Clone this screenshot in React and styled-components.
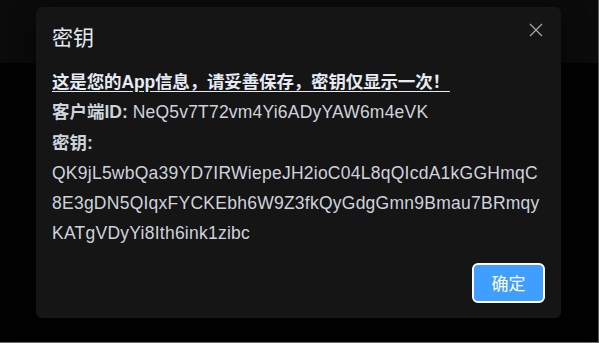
import styled, { createGlobalStyle } from "styled-components";

const GlobalStyle = createGlobalStyle`
  html, body {
    margin: 0;
    padding: 0;
    background: #020202;
  }
  body {
    font-family: "Liberation Sans", "Noto Sans CJK SC", sans-serif;
  }
`;

const appInfo = {
  clientId: "NeQ5v7T72vm4Yi6ADyYAW6m4eVK",
  secret:
    "QK9jL5wbQa39YD7IRWiepeJH2ioC04L8qQIcdA1kGGHmqC8E3gDN5QIqxFYCKEbh6W9Z3fkQyGdgGmn9Bmau7BRmqyKATgVDyYi8Ith6ink1zibc",
};

const Page = styled.div`
  position: relative;
  width: 599px;
  height: 343px;
  box-sizing: border-box;
  border-right: 1px solid #5a5a5a;
  border-bottom: 1px solid #6a6a6a;
  background: #020202;
  overflow: hidden;
`;

const TopBar = styled.div`
  height: 63px;
  background: #0b0b0b;
`;

const Overlay = styled.div`
  position: absolute;
  inset: 0;
  padding: 7px 0 0 36px;
`;

const Dialog = styled.div`
  position: relative;
  width: 525px;
  box-sizing: border-box;
  padding: 16px 16px 15px;
  background: #151515;
  border-radius: 6px;
  box-shadow: 0 8px 24px rgba(0, 0, 0, 0.6);
`;

const Title = styled.h2`
  margin: 0;
  font-size: 21px;
  line-height: 29px;
  font-weight: 400;
  color: #e5eaf3;
`;

const CloseButton = styled.button`
  position: absolute;
  top: 16px;
  right: 18px;
  width: 14px;
  height: 14px;
  padding: 0;
  border: none;
  background: none;
  color: #a3a6ad;
  cursor: pointer;
  display: flex;

  svg {
    width: 14px;
    height: 14px;
  }
`;

const Body = styled.div`
  margin-top: 15px;
  font-size: 17.5px;
  line-height: 30.3px;
  color: #cfd3dc;
`;

const Notice = styled.div`
  font-weight: 700;
  color: #e5eaf3;
  letter-spacing: -0.15px;
  text-decoration: underline;
  text-underline-offset: 3px;
`;

const Label = styled.span`
  font-weight: 700;
  color: #cfd3dc;
`;

const Value = styled.span`
  letter-spacing: ${(p) => (p.$spaced ? "0.2px" : "0")};
`;

const Secret = styled.div`
  letter-spacing: 0.25px;
  word-break: break-all;
`;

const Footer = styled.div`
  display: flex;
  justify-content: flex-end;
  margin-top: 14px;
`;

const PrimaryButton = styled.button`
  width: 73px;
  height: 40px;
  box-sizing: border-box;
  border: 2px solid #ffffff;
  border-radius: 6px;
  background: #409eff;
  color: #ffffff;
  font-family: "Liberation Sans", "Noto Sans CJK SC", sans-serif;
  font-size: 17px;
  cursor: pointer;
`;

const App = () => {
  return (
    <>
      <GlobalStyle />
      <Page>
        <TopBar />
        <Overlay>
          <Dialog>
            <Title>密钥</Title>
            <CloseButton aria-label="关闭">
              <svg viewBox="0 0 14 14" fill="none" stroke="currentColor" strokeWidth="1.3">
                <path d="M1 1 L13 13 M13 1 L1 13" />
              </svg>
            </CloseButton>
            <Body>
              <Notice>这是您的App信息，请妥善保存，密钥仅显示一次！</Notice>
              <div>
                <Label>客户端ID: </Label>
                <Value $spaced>{appInfo.clientId}</Value>
              </div>
              <div>
                <Label>密钥:</Label>
              </div>
              <Secret>{appInfo.secret}</Secret>
            </Body>
            <Footer>
              <PrimaryButton>确定</PrimaryButton>
            </Footer>
          </Dialog>
        </Overlay>
      </Page>
    </>
  );
};

export default App;
